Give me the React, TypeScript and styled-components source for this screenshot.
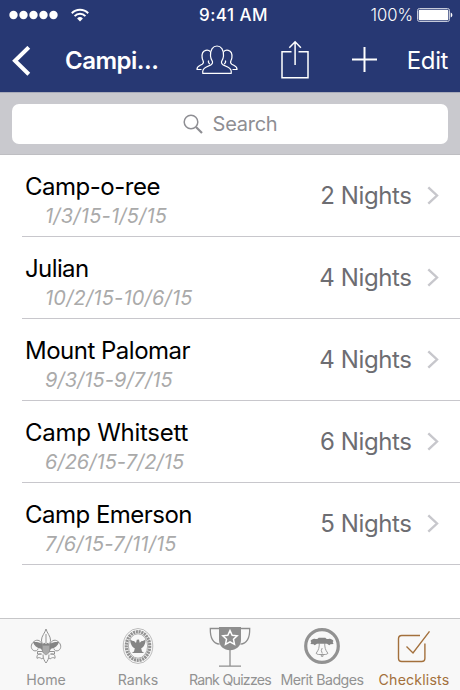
import React from "react";
import styled, { createGlobalStyle } from "styled-components";

const GlobalStyle = createGlobalStyle`
  * { box-sizing: border-box; }
  body { margin: 0; background: #fff; }
`;

const Screen = styled.div`
  width: 460px;
  height: 690px;
  display: flex;
  flex-direction: column;
  overflow: hidden;
  background: #fff;
  font-family: Inter, "Liberation Sans", sans-serif;
  white-space: nowrap;
`;

const Header = styled.header`
  height: 92px;
  flex: none;
  background: #273873;
  color: #fff;
`;

const StatusBar = styled.div`
  height: 30px;
  display: grid;
  grid-template-columns: 1fr auto 1fr;
  align-items: center;
  padding: 0 7px 0 9px;
`;

const Signal = styled.div`
  display: flex;
  align-items: center;
  gap: 12px;
  svg { display: block; }
`;

const Clock = styled.span`
  font-size: 17px;
  font-weight: 500;
  letter-spacing: 0.45px;
  line-height: 20px;
  padding-left: 5px;
`;

const Battery = styled.div`
  display: flex;
  align-items: center;
  justify-content: flex-end;
  gap: 4px;
  font-size: 16.6px;
  font-weight: 300;
  line-height: 20px;
  letter-spacing: 0;
  svg { display: block; }
`;

const NavBar = styled.nav`
  height: 62px;
  display: flex;
  align-items: center;
  padding: 0 12px;
  svg { display: block; flex: none; }
`;

const Title = styled.h1`
  margin: 0 0 0 34px;
  width: 131px;
  flex: none;
  font-size: 24px;
  font-weight: 600;
  line-height: 30px;
  letter-spacing: -0.5px;
`;

const Actions = styled.div`
  display: flex;
  flex: none;
  gap: 42px;
  padding-bottom: 3px;
`;

const EditButton = styled.span`
  margin-left: auto;
  font-size: 24px;
  line-height: 30px;
  letter-spacing: -0.4px;
`;

const SearchBar = styled.div`
  height: 63px;
  flex: none;
  padding: 11.5px 12px;
  background: #c9c9ce;
  border-top: 1px solid #a9abb9;
  border-bottom: 1px solid #bebec2;
`;

const SearchField = styled.div`
  height: 40px;
  margin-top: -1px;
  border-radius: 7px;
  background: #fff;
  color: #8e8e93;
  display: flex;
  align-items: center;
  justify-content: center;
  gap: 10px;
  font-size: 20px;
  letter-spacing: -0.25px;
`;

const List = styled.main`
  flex: 1;
  padding-left: 22px;
`;

const Row = styled.div`
  height: 82px;
  border-bottom: 1px solid #c8c7cc;
  display: flex;
  justify-content: space-between;
  padding: 17px 21px 0 3px;
`;

const Name = styled.div<{ $track: number }>`
  font-size: 24px;
  line-height: 30px;
  color: #000;
  letter-spacing: ${(p) => p.$track}px;
`;

const Dates = styled.div<{ $track: number }>`
  padding-left: 20px;
  font-size: 20px;
  line-height: 28px;
  font-style: italic;
  color: #aaa;
  letter-spacing: ${(p) => p.$track}px;
`;

const Nights = styled.div`
  height: 46px;
  display: flex;
  align-items: center;
  gap: 15.5px;
  font-size: 24px;
  color: #6d6d72;
  letter-spacing: -0.4px;
`;

const TabBar = styled.footer`
  height: 72px;
  flex: none;
  border-top: 1px solid #c6c6c8;
  background: #f8f8f8;
  display: grid;
  grid-template-columns: repeat(5, 92px);
`;

const Tab = styled.div<{ $active?: boolean; $track: number }>`
  display: flex;
  flex-direction: column;
  align-items: center;
  color: ${(p) => (p.$active ? "#a3703c" : "#929292")};
  font-size: 14.2px;
  line-height: 18px;
  letter-spacing: ${(p) => p.$track}px;
  svg { display: block; height: 52px; width: 60px; }
`;

const Chevron = () => (
  <svg width="12" height="20" viewBox="0 0 12 20" fill="none" stroke="#c7c7cc" strokeWidth="2.4">
    <path d="M1.3 2.3 10 10.500 1.3 18.700" />
  </svg>
);

const PeopleIcon = () => (
  <svg width="42" height="40" viewBox="0 -5 42 40" fill="none" stroke="#fff" strokeWidth="1.2" strokeLinejoin="round">
    <path d="M6.800 28.300h28.400c.6-3.600-.7-5-3.100-6.100l-5-2.300c-1.800-.9-2.100-2.700-1-4.500 1-1.500 1.200-2.800 1.400-4.400C27.900 4.800 25 1 21 1s-6.900 3.800-6.500 10c.2 1.600.4 2.900 1.400 4.400 1.100 1.800.8 3.600-1 4.500l-5 2.300C7.500 23.300 6.200 24.700 6.800 28.300Z" />
    <path d="M14.300 6.500C12.900 5.100 11.300 4.900 9.700 5.300 6.700 6 5.700 9 6.100 12.700c.2 1.300.4 2 .9 2.800.8 1.600.5 2.900-.8 3.700l-2.400 1.300C1.300 21.800.8 22.700 1 24.500h4.500M12.600 15.500c-.5 1.300 0 2.600 1.200 3.400" />
    <path d="M27.700 6.500c1.400-1.400 3-1.600 4.600-1.200 3 .7 4 3.700 3.600 7.400-.2 1.300-.4 2-.9 2.800-.8 1.600-.5 2.900.8 3.700l2.400 1.300c2.500 1.300 3 2.200 2.800 4h-4.500M29.400 15.500c.5 1.300 0 2.600-1.200 3.400" />
  </svg>
);

const ShareIcon = () => (
  <svg width="30" height="40" viewBox="0 0 30 40" fill="none" stroke="#fff" strokeWidth="1.5">
    <path d="M11.500 11.800H2v26h26v-26h-9.500M15.100 25V2M9.300 7.700l5.800-5.900 5.800 5.900" />
  </svg>
);

const PlusIcon = () => (
  <svg width="26" height="40" viewBox="0 0 26 40" stroke="#fff" strokeWidth="2">
    <path d="M12.500 7v25M0 19.500h25" />
  </svg>
);

const HomeIcon = () => (
  <svg viewBox="0 0 60 52" fill="none" stroke="#929292" strokeWidth="1">
    <path d="M30 10c-1 4-4.500 7-4.500 11 0 2 .8 4 2 6h5c1.200-2 2-4 2-6 0-4-3.500-7-4.500-11ZM30 15v9" />
    <path d="M26 27c0-5-4.500-7.500-8-4.500-3.700 2.800-3.300 7.200-.8 8.800 2.200 1.400 4.700.2 4.900-1.800M34 27c0-5 4.500-7.500 8-4.500 3.700 2.800 3.300 7.200.8 8.800-2.200 1.400-4.700.2-4.900-1.800" />
    <path d="M17 23c4-.2 7 .3 9.500 2.400l1.500-1.600 2 1 2-1 1.500 1.600c2.500-2.100 5.500-2.600 9.500-2.400-1 3.600-4 6-8 6.800l-2.300 4.200h-5.400L25 29.800c-4-.8-7-3.200-8-6.800Z" fill="#858585" stroke="none" />
    <path d="M26.500 26.500h7v5.300c0 2-1.700 3-3.500 4.200-1.800-1.200-3.500-2.200-3.500-4.200Z" fill="#aaa" strokeWidth=".7" />
    <path d="M21.500 32.500h5.300M33.200 32.500h5.300v2.600h-4M21.500 32.500v2.600h4" />
    <path d="M25.500 35c-3-.5-5 1-4.500 4.300 1.800-1.200 3-.7 4.800.5l1.400-1M34.500 35c3-.5 5 1 4.500 4.300-1.800-1.200-3-.7-4.800.5l-1.400-1M27 35.500c0 4 1.500 6.500 3 8.500 1.500-2 3-4.500 3-8.500" />
  </svg>
);

const RanksIcon = () => (
  <svg viewBox="0 0 60 52" fill="none" stroke="#929292">
    <ellipse cx="30" cy="27" rx="14.800" ry="17.500" strokeWidth=".6" />
    <ellipse cx="30" cy="27" rx="11.700" ry="14.300" strokeWidth="3.200" strokeDasharray="2.100 .7" />
    <ellipse cx="30" cy="27" rx="9.600" ry="12.200" strokeWidth=".7" />
    <path d="M22.200 20c.7 1.400 2.400 2 3.800 2l2 2 .8-3.200 2.200-.2.700 3.200 2-1.800c1.400 0 3.100-.6 3.800-2 .3 4.500-1.500 8-4.300 9.300l.8 3.300 2.200 1.400H23.800l2.200-1.400.8-3.300c-2.800-1.300-4.800-4.800-4.600-9.300Z" fill="#858585" stroke="none" />
  </svg>
);

const TrophyIcon = () => (
  <svg viewBox="0 0 60 52" fill="none" stroke="#8e8e8e" strokeWidth="1.300">
    <path d="M19 8h22v13c0 6-5 10.300-11 10.300S19 27 19 21Z" fill="#8e8e8e" stroke="none" />
    <path d="M19 9.500h-8.700c-.2 9 2.400 15 9.300 15.700M41 9.500h8.700c.2 9-2.400 15-9.300 15.700M30 31v16M19 47.200h22" />
    <path d="m30 11.600 2.200 4.600 5 .6-3.700 3.500 1 5-4.500-2.500-4.500 2.500 1-5-3.700-3.500 5-.6Z" stroke="#fff" strokeWidth="1.500" />
  </svg>
);

const BadgeIcon = () => (
  <svg viewBox="0 0 60 52" fill="none" stroke="#929292">
    <circle cx="30" cy="27" r="16.300" strokeWidth="3.200" />
    <path d="M18.500 22c1.200-1.800 3-2.800 5-2h1.800l1.400-1.200h6.600l1.400 1.200h1.800c2-.8 3.800.2 5 2l-.8 1 .8 2-3 .2-1.200 1-2.300-1.400h-10l-2.300 1.400-1.200-1-3-.2.800-2Z" fill="#858585" stroke="none" />
    <path d="M27.300 24c-.1 4.500-.3 6.500-3.200 10.300.5.700 1.300 1 2.500 1.200h6.800c1.200-.2 2-.5 2.500-1.200-2.900-3.800-3.100-5.800-3.200-10.300M30.200 29l-.9 2.500 1 3M29.300 35.500v1.800h1.700v-1.800" strokeWidth=".9" />
  </svg>
);

const ChecklistIcon = () => (
  <svg viewBox="0 0 60 52" fill="none" stroke="#a3703c" strokeWidth="1.400">
    <path d="M36 16.500H17.700c-1.900 0-3.200 1.300-3.200 3.200v19.600c0 1.900 1.300 3.200 3.200 3.200h20c1.900 0 3.200-1.300 3.200-3.200V24.500" />
    <path d="m22.500 27.500 6.500 6.500L45.500 12.300" />
  </svg>
);

const trips = [
  { name: "Camp-o-ree", dates: "1/3/15-1/5/15", nights: 2, nameTrack: -0.48, dateTrack: 0.22 },
  { name: "Julian", dates: "10/2/15-10/6/15", nights: 4, nameTrack: -0.6, dateTrack: 0.2 },
  { name: "Mount Palomar", dates: "9/3/15-9/7/15", nights: 4, nameTrack: -0.5, dateTrack: 0.05 },
  { name: "Camp Whitsett", dates: "6/26/15-7/2/15", nights: 6, nameTrack: -0.27, dateTrack: 0.03 },
  { name: "Camp Emerson", dates: "7/6/15-7/11/15", nights: 5, nameTrack: -0.52, dateTrack: 0.15 },
];

const tabs = [
  { label: "Home", Icon: HomeIcon, track: 0 },
  { label: "Ranks", Icon: RanksIcon, track: 0 },
  { label: "Rank Quizzes", Icon: TrophyIcon, track: -0.75 },
  { label: "Merit Badges", Icon: BadgeIcon, track: -0.5 },
  { label: "Checklists", Icon: ChecklistIcon, track: 0.15, active: true },
];

export default function App() {
  return (
    <Screen>
      <GlobalStyle />
      <Header>
        <StatusBar>
          <Signal>
            <svg width="50" height="10" viewBox="0 0 50 10" fill="#fff">
              {[4.500, 14.500, 24.500, 34.500, 44.500].map((x) => <circle key={x} cx={x} cy="5" r="4.200" />)}
            </svg>
            <svg width="18" height="14" viewBox="0 0 18 14" fill="none" stroke="#fff" strokeWidth="2">
              <path d="M.8 5.200a11.600 11.600 0 0 1 16.400 0M3.600 8.100a7.600 7.600 0 0 1 10.800 0" />
              <path d="M9 13.500 6.100 10.500a4.100 4.100 0 0 1 5.800 0Z" fill="#fff" stroke="none" />
            </svg>
          </Signal>
          <Clock>9:41 AM</Clock>
          <Battery>
            100%
            <svg width="36" height="14" viewBox="0 0 36 14">
              <rect x=".5" y=".5" width="32" height="13" rx="2" fill="none" stroke="#c5cada" />
              <rect x="1.700" y="1.700" width="29.600" height="10.600" rx="1" fill="#fff" />
              <path d="M33.700 4.500c2.200.8 2.200 4.200 0 5Z" fill="#fff" />
            </svg>
          </Battery>
        </StatusBar>
        <NavBar>
          <svg width="19" height="31" viewBox="0 0 19 31" fill="none" stroke="#fff" strokeWidth="4">
            <path d="M16.800 1.300 3 14.800 16.800 28.300" />
          </svg>
          <Title>Campi...</Title>
          <Actions>
            <PeopleIcon />
            <ShareIcon />
            <PlusIcon />
          </Actions>
          <EditButton>Edit</EditButton>
        </NavBar>
      </Header>
      <SearchBar>
        <SearchField>
          <svg width="20" height="20" viewBox="0 0 20 20" fill="none" stroke="#8e8e93" strokeWidth="1.500">
            <circle cx="8" cy="8" r="6.800" />
            <path d="m13 13 6 6" strokeWidth="2.200" />
          </svg>
          Search
        </SearchField>
      </SearchBar>
      <List>
        {trips.map((t) => (
          <Row key={t.name}>
            <div>
              <Name $track={t.nameTrack}>{t.name}</Name>
              <Dates $track={t.dateTrack}>{t.dates}</Dates>
            </div>
            <Nights>
              {t.nights} Nights
              <Chevron />
            </Nights>
          </Row>
        ))}
      </List>
      <TabBar>
        {tabs.map(({ label, Icon, track, active }) => (
          <Tab key={label} $active={active} $track={track}>
            <Icon />
            {label}
          </Tab>
        ))}
      </TabBar>
    </Screen>
  );
}
